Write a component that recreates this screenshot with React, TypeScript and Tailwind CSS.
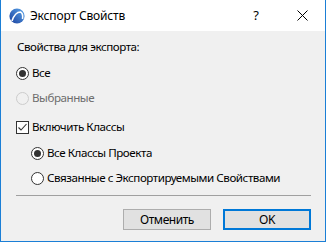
import React from "react";

function Radio({ checked, disabled }: { checked?: boolean; disabled?: boolean }) {
  return (
    <span
      className={
        "flex h-[13px] w-[13px] shrink-0 items-center justify-center rounded-full border " +
        (disabled ? "border-[#cccccc] bg-[#f0f0f0]" : "border-[#333333] bg-white")
      }
    >
      {checked && <span className="h-[7px] w-[7px] rounded-full bg-[#333333]" />}
    </span>
  );
}

function Checkbox({ checked }: { checked?: boolean }) {
  return (
    <span className="flex h-[13px] w-[13px] shrink-0 items-center justify-center border border-[#333333] bg-white">
      {checked && (
        <svg width="11" height="11" viewBox="0 0 11 11">
          <path d="M1.5 5.5 L4 8 L9.5 2" fill="none" stroke="#333333" strokeWidth="1.1" />
        </svg>
      )}
    </span>
  );
}

function Logo() {
  return (
    <svg width="16" height="16" viewBox="0 0 16 16">
      <defs>
        <linearGradient id="lg" x1="0" y1="1" x2="1" y2="0">
          <stop offset="0" stopColor="#1a3f9c" />
          <stop offset="1" stopColor="#5aa6ec" />
        </linearGradient>
      </defs>
      <circle cx="8" cy="8" r="7.6" fill="url(#lg)" />
      <path d="M3 13 C5 7 8 4 11.5 4 C13.5 5 14 8 13.5 11" fill="none" stroke="#ffffff" strokeWidth="1.6" />
    </svg>
  );
}

export default function App() {
  const font = { fontFamily: '"Noto Sans", "Open Sans", sans-serif' };
  return (
    <div className="h-[242px] w-[327px] bg-white" style={font}>
      <div className="flex h-[242px] w-[326px] flex-col border-x border-b border-[#1b7fd6]">
        <div className="flex h-[31px] shrink-0 items-center bg-white pl-[8px] text-[12px] text-black">
          <Logo />
          <span className="ml-[5px] flex-1 leading-[16px] tracking-[-0.15px]">Экспорт Свойств</span>
          <span className="flex h-[31px] w-[46px] items-center justify-center text-[13px]">?</span>
          <span className="flex h-[31px] w-[46px] items-center justify-center">
            <svg width="11" height="11" viewBox="0 0 11 11">
              <path d="M0.5 0.5 L10.5 10.5 M10.5 0.5 L0.5 10.5" stroke="#000" strokeWidth="1" />
            </svg>
          </span>
        </div>
        <div className="flex flex-1 flex-col bg-[#f0f0f0] pl-[15px] pr-[14px] text-[11.6px] leading-[16px] tracking-[-0.45px] text-black">
          <div className="mt-[8px] h-[16px] pl-[1px]">Свойства для экспорта:</div>
          <div className="mt-[10px] flex h-[16px] items-center gap-[3px]">
            <Radio checked />
            <span>Все</span>
          </div>
          <div className="mt-[9px] flex h-[16px] items-center gap-[3px] text-[#6d6d6d]">
            <Radio disabled />
            <span>Выбранные</span>
          </div>
          <div className="mt-[13px] flex h-[16px] items-center gap-[3px]">
            <Checkbox checked />
            <span>Включить Классы</span>
          </div>
          <div className="mt-[10px] flex h-[16px] items-center gap-[3px] pl-[15px]">
            <Radio checked />
            <span>Все Классы Проекта</span>
          </div>
          <div className="mt-[9px] flex h-[16px] items-center gap-[3px] pl-[15px]">
            <Radio />
            <span>Связанные с Экспортируемыми Свойствами</span>
          </div>
          <div className="mt-[9px] h-px bg-[#a0a0a0]" />
          <div className="mt-[13px] flex justify-end gap-[12px]">
            <button className="flex h-[21px] w-[88px] items-center justify-center border border-[#adadad] bg-[#e1e1e1] text-[12px] text-black">
              Отменить
            </button>
            <button className="flex h-[21px] w-[88px] items-center justify-center border-2 border-[#0078d7] bg-[#e1e1e1] text-[12px] text-black">
              OK
            </button>
          </div>
        </div>
      </div>
    </div>
  );
}
